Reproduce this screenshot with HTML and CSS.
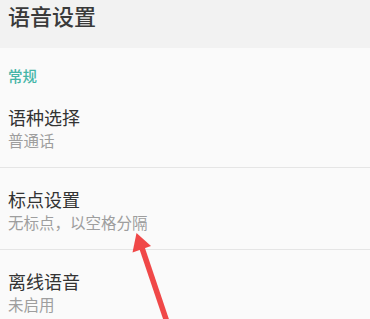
FILE: index.html
```html
<!DOCTYPE html>
<html lang="zh-CN">
<head>
<meta charset="utf-8">
<link rel="stylesheet" href="styles.css">
</head>
<body>
<div class="page">
  <header class="topbar">
    <h1 class="title">语音设置</h1>
  </header>
  <div class="section-label">常规</div>
  <ul class="list">
    <li class="item">
      <div class="item-title">语种选择</div>
      <div class="item-sub">普通话</div>
    </li>
    <li class="item">
      <div class="item-title">标点设置</div>
      <div class="item-sub">无标点，以空格分隔</div>
    </li>
    <li class="item">
      <div class="item-title">离线语音</div>
      <div class="item-sub">未启用</div>
    </li>
  </ul>
  <svg class="arrow" width="370" height="319" viewBox="0 0 370 319">
    <line x1="141" y1="245" x2="168" y2="325" stroke="#f04848" stroke-width="5.5"/>
    <polygon points="136.5,233 132.5,252.5 151,246" fill="#f04848"/>
  </svg>
</div>
</body>
</html>
```

FILE: styles.css
```css
* { box-sizing: border-box; }
html, body {
  margin: 0;
  padding: 0;
  background: #fafafa;
  font-family: "Noto Sans CJK SC", "Noto Sans", sans-serif;
}
.page {
  position: relative;
  width: 370px;
  height: 319px;
  overflow: hidden;
  background: #fafafa;
}
.topbar {
  height: 48px;
  background: #f2f2f2;
  padding-left: 8px;
}
.title {
  margin: 0;
  font-size: 22px;
  line-height: 30px;
  font-weight: 500;
  color: #3a3a3a;
}
.section-label {
  margin-top: 18px;
  padding-left: 8px;
  font-size: 14.5px;
  line-height: 20px;
  font-weight: 500;
  color: #45b5a6;
}
.list {
  list-style: none;
  margin: 0;
  padding: 0;
}
.item {
  padding: 19px 8px 17px;
  border-bottom: 1px solid #e5e5e5;
}
.item-title {
  font-size: 18px;
  line-height: 25px;
  color: #333333;
}
.item-sub {
  font-size: 15.5px;
  line-height: 20px;
  color: #9e9e9e;
}
.arrow {
  position: absolute;
  left: 0;
  top: 0;
  pointer-events: none;
}
```
